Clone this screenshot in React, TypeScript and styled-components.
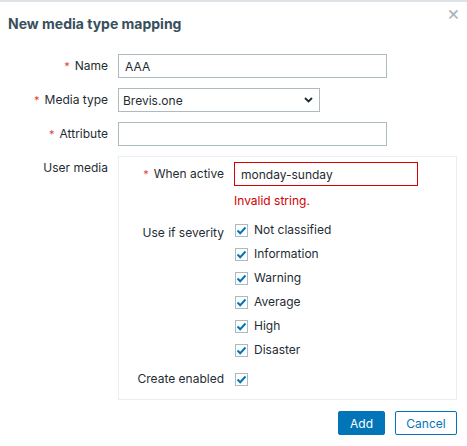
import React from 'react';
import styled, { createGlobalStyle } from 'styled-components';

const GlobalStyle = createGlobalStyle`
  html, body {
    margin: 0;
    padding: 0;
    background: #ffffff;
  }
  body {
    font-family: Inter, "Noto Sans", "Liberation Sans", sans-serif;
    font-size: 12px;
    color: #1f2c33;
  }
`;

const severities = ['Not classified', 'Information', 'Warning', 'Average', 'High', 'Disaster'];

const Check: React.FC = () => (
  <CheckBox>
    <svg width="11" height="9" viewBox="0 0 11 9">
      <path d="M1.5 4.5 L4.2 7.2 L9.5 1.5" fill="none" stroke="#0275b8" strokeWidth="2" />
    </svg>
  </CheckBox>
);

const App: React.FC = () => {
  return (
    <Dialog>
      <GlobalStyle />
      <Header>
        <Title>New media type mapping</Title>
        <Close>×</Close>
      </Header>
      <Form>
        <Label required>Name</Label>
        <TextInput width={269} defaultValue="AAA" />

        <Label required>Media type</Label>
        <Select>
          <span>Brevis.one</span>
          <svg width="9" height="6" viewBox="0 0 9 6">
            <path d="M1 1 L4.5 4.5 L8 1" fill="none" stroke="#1f2c33" strokeWidth="1.8" />
          </svg>
        </Select>

        <Label required>Attribute</Label>
        <TextInput width={269} defaultValue="" />

        <Label top>User media</Label>
        <Box>
          <InnerGrid>
            <Label required top>When active</Label>
            <div>
              <TextInput width={184} defaultValue="monday-sunday" invalid />
              <ErrorText>Invalid string.</ErrorText>
            </div>

            <Label top>Use if severity</Label>
            <CheckList>
              {severities.map((s) => (
                <CheckRow key={s}>
                  <Check />
                  <span>{s}</span>
                </CheckRow>
              ))}
            </CheckList>

            <Label>Create enabled</Label>
            <CheckRow>
              <Check />
            </CheckRow>
          </InnerGrid>
        </Box>
      </Form>
      <Footer>
        <PrimaryBtn>Add</PrimaryBtn>
        <SecondaryBtn>Cancel</SecondaryBtn>
      </Footer>
    </Dialog>
  );
};

export default App;

const Dialog = styled.div`
  width: 467px;
  height: 446px;
  box-sizing: border-box;
  border-top: 2px solid #dce2e5;
  display: flex;
  flex-direction: column;
`;

const Header = styled.div`
  position: relative;
  height: 52px;
  padding: 13px 8px 0;
  box-sizing: border-box;
`;

const Title = styled.h4`
  margin: 0;
  font-size: 14px;
  font-weight: 700;
  color: #384f5c;
  line-height: 18px;
`;

const Close = styled.span`
  position: absolute;
  right: 7px;
  top: 1px;
  font-size: 20px;
  line-height: 20px;
  color: #a5b4bb;
`;

const Form = styled.div`
  display: grid;
  grid-template-columns: 108px 1fr;
  column-gap: 10px;
  row-gap: 10px;
  padding-right: 10px;
  align-items: center;
`;

const Label = styled.label<{ required?: boolean; top?: boolean }>`
  text-align: right;
  align-self: ${(p) => (p.top ? 'start' : 'center')};
  padding-top: ${(p) => (p.top ? '4px' : '0')};
  line-height: 16px;
  white-space: nowrap;
  &::before {
    content: ${(p) => (p.required ? '"*"' : 'none')};
    color: #e04545;
    font-size: 11px;
    margin-right: 5px;
  }
`;

const TextInput = styled.input<{ width: number; invalid?: boolean }>`
  width: ${(p) => p.width}px;
  height: 24px;
  box-sizing: border-box;
  border: 1px solid ${(p) => (p.invalid ? '#d40000' : '#acbbc2')};
  padding: 0 6px;
  font-family: inherit;
  font-size: 12px;
  color: #1f2c33;
  outline: none;
  display: block;
`;

const Select = styled.div`
  width: 202px;
  height: 24px;
  box-sizing: border-box;
  border: 1px solid #acbbc2;
  padding: 0 6px 0 4px;
  display: flex;
  align-items: center;
  justify-content: space-between;
`;

const Box = styled.div`
  border: 1px solid #ebeef0;
  width: 339px;
  height: 244px;
  box-sizing: border-box;
  padding-top: 5px;
`;

const InnerGrid = styled.div`
  display: grid;
  grid-template-columns: 105px 1fr;
  column-gap: 10px;
  row-gap: 13px;
`;

const ErrorText = styled.div`
  color: #d40000;
  margin-top: 8px;
  line-height: 14px;
`;

const CheckList = styled.div`
  display: flex;
  flex-direction: column;
  gap: 8px;
  padding-top: 1px;
`;

const CheckRow = styled.div`
  display: flex;
  align-items: center;
  gap: 6px;
  height: 16px;
  line-height: 16px;
`;

const CheckBox = styled.span`
  width: 13px;
  height: 13px;
  box-sizing: border-box;
  border: 1px solid #acbbc2;
  display: inline-flex;
  align-items: center;
  justify-content: center;
  margin-left: 1px;
`;

const Footer = styled.div`
  display: flex;
  justify-content: flex-end;
  gap: 10px;
  padding: 11px 10px 0;
`;

const BaseBtn = styled.button`
  height: 24px;
  box-sizing: border-box;
  font-family: inherit;
  font-size: 12px;
  padding: 0 10px;
  border-radius: 2px;
`;

const PrimaryBtn = styled(BaseBtn)`
  width: 47px;
  background: #0275b8;
  border: 1px solid #0275b8;
  color: #ffffff;
`;

const SecondaryBtn = styled(BaseBtn)`
  width: 62px;
  background: #ffffff;
  border: 1px solid #0275b8;
  color: #0275b8;
`;
